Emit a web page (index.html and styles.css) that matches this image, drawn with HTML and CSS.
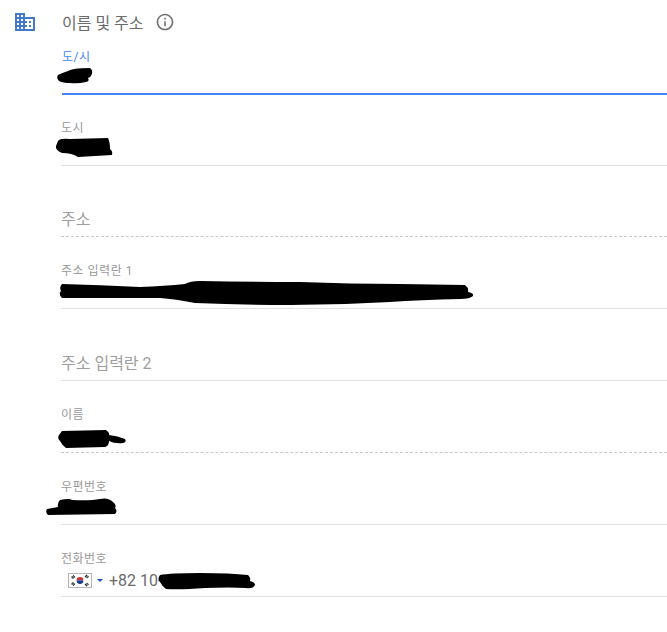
FILE: index.html
```html
<!DOCTYPE html>
<html lang="ko">
<head>
    <meta charset="UTF-8">
    <meta name="viewport" content="width=device-width, initial-scale=1.0">
    <title>이름 및 주소</title>
    <link rel="stylesheet" href="styles.css">
</head>
<body>
    <div class="page">
        <div class="icon-col">
            <svg class="domain-icon" width="24" height="24" viewBox="0 0 24 24"><path fill="#4478cc" d="M12 7V3H2v18h20V7H12zM6 19H4v-2h2v2zm0-4H4v-2h2v2zm0-4H4V9h2v2zm0-4H4V5h2v2zm4 12H8v-2h2v2zm0-4H8v-2h2v2zm0-4H8V9h2v2zm0-4H8V5h2v2zm10 12h-8v-2h2v-2h-2v-2h2v-2h-2V9h8v10zm-2-8h-2v2h2v-2zm0 4h-2v2h2v-2z"/></svg>
        </div>
        <div class="form">
            <div class="form-title">
                <span>이름 및 주소</span>
                <svg width="20" height="20" viewBox="0 0 24 24"><path fill="#757575" d="M11 17h2v-6h-2v6zm1-15C6.48 2 2 6.48 2 12s4.480 10 10 10 10-4.480 10-10S17.520 2 12 2zm0 18c-4.410 0-8-3.590-8-8s3.590-8 8-8 8 3.590 8 8-3.590 8-8 8zm-1-11h2V7h-2v2z"/></svg>
            </div>

            <div class="field active"><label>도/시</label></div>
            <div class="field short"><label>도시</label></div>
            <div class="field short empty dashed"><span class="placeholder">주소</span></div>
            <div class="field"><label>주소 입력란 1</label></div>
            <div class="field empty"><span class="placeholder">주소 입력란 2</span></div>
            <div class="field dashed"><label>이름</label></div>
            <div class="field"><label>우편번호</label></div>
            <div class="field">
                <label>전화번호</label>
                <div class="phone">
                    <svg class="flag" width="24" height="15" viewBox="0 0 24 15">
                        <rect x="0.5" y="0.5" width="23" height="14" fill="#fff" stroke="#b5b5b5"/>
                        <path fill="#cd2e3a" d="M8.600 7.500a3.400 3.400 0 0 1 6.800 0z"/>
                        <path fill="#0f3c8c" d="M8.600 7.500a3.400 3.400 0 0 0 6.800 0z"/>
                        <g stroke="#222" stroke-width="1.300" stroke-dasharray="1.500 .5">
                            <path d="M3.500 4.500l2.500-2M4.500 5.500l2.500-2"/>
                            <path d="M17 3l2.500 2M18 2l2.500 2"/>
                            <path d="M3.500 10.500l2.500 2M4.500 9.500l2.500 2"/>
                            <path d="M17 12l2.500-2M18 13l2.500-2"/>
                        </g>
                    </svg>
                    <span class="arrow"></span>
                    <span class="phone-number">+82 10-</span>
                </div>
            </div>
        </div>
    </div>

    <!-- scribbles covering the personal data -->
    <svg class="redactions" width="667" height="632" viewBox="0 0 667 632">
        <path d="M68 71Q72 68 90 68Q93 70 92 74Q91 77 88 78Q90 81 86 82Q78 84 70 83Q63 83 59 81Q56 78 58 75Q62 73 68 71z"/>
        <path d="M58 141Q60 138 70 139L108 138Q110 142 110 149Q113 151 112 155L78 157Q72 153 62 153Q55 150 56 146z"/>
        <path d="M62 284Q100 285 140 287Q165 286 185 284Q190 281 200 281Q250 282 300 282Q350 284 400 284L465 285Q469 288 468 292Q474 293 473 296Q470 299 460 299Q420 300 390 302Q340 305 290 305Q240 305 195 303Q175 299 160 298L62 298Q58 294 61 291Q59 287 62 284z"/>
        <path d="M62 431L106 430Q110 433 109 435Q118 436 125 439Q127 442 123 443Q115 444 109 441Q109 446 105 447L66 448Q62 445 60 441Q57 438 59 435z"/>
        <path d="M60 500Q70 498 72 500Q90 501 100 499Q108 497 113 502Q117 505 115 508Q118 511 115 514L48 515Q45 512 47 509L58 507Q57 503 60 500z"/>
        <path d="M160 575Q170 573 200 573Q230 573 248 575Q251 578 250 581Q255 582 255 585Q253 589 246 588Q230 587 205 588Q180 590 166 589Q162 586 160 582Q157 579 160 575z"/>
    </svg>
</body>
</html>
```

FILE: styles.css
```css
body { margin: 0; background-color: white; font-family: Roboto, "Noto Sans CJK KR", sans-serif; }
.page { display: flex; width: 667px; height: 632px; overflow: hidden; }
.icon-col { width: 61px; flex-shrink: 0; padding: 10px 0 0 13px; box-sizing: border-box; }
.domain-icon { display: block; }
.form { flex: 1; }
.form-title { display: flex; align-items: center; gap: 11px; height: 24px; padding-top: 10px; padding-left: 1px; font-size: 16px; color: #6b6b6b; }
.form-title svg { display: block; }
.field { height: 72px; box-sizing: border-box; border-bottom: 1px solid #e0e0e0; padding-top: 26px; }
.field.short { height: 71px; padding-top: 25px; }
.field label { display: block; font-size: 12px; line-height: 16px; letter-spacing: .5px; color: #999; }
.field.active { height: 61px; margin-left: 1px; padding-top: 15px; border-bottom: 2px solid #4285f4; }
.field.active label { color: #4285f4; }
.field.dashed { border-bottom: 1px dashed #c8c8c8; }
.field.empty { display: flex; align-items: flex-end; padding: 0 0 5px; }
.placeholder { font-size: 16px; line-height: 22px; color: #9e9e9e; }
.phone { display: flex; align-items: center; height: 24px; padding: 1px 0 0 7px; }
.flag { display: block; }
.arrow { width: 0; height: 0; margin: 0 6px 0 5px; border-left: 3px solid transparent; border-right: 3px solid transparent; border-top: 3px solid #1a56c4; }
.phone-number { font-size: 16px; color: #6b6b6b; }
.redactions { position: absolute; top: 0; left: 0; }
```
